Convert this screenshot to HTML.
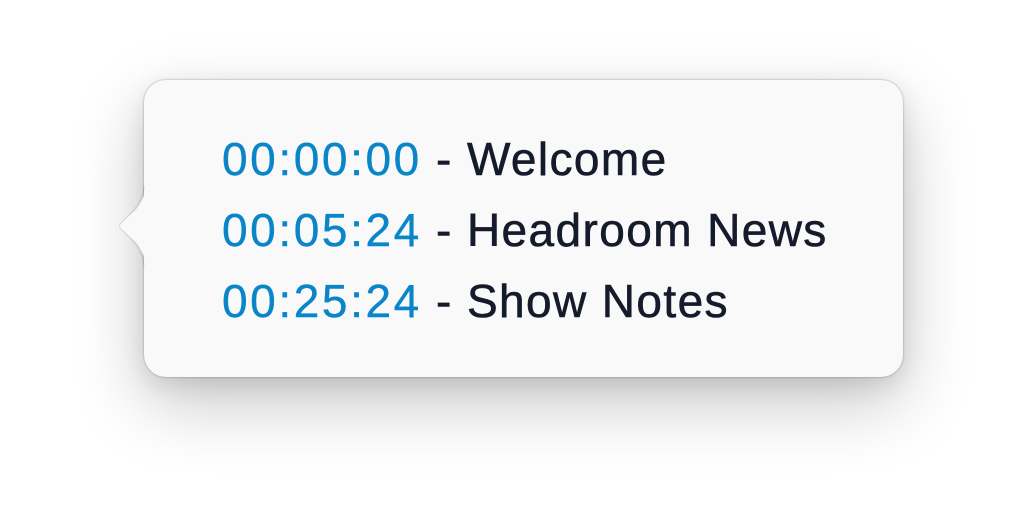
<!DOCTYPE html>
<html><head><style>
html,body{margin:0;padding:0;width:1014px;height:522px;background:#fff;overflow:hidden}
.box{position:absolute;left:144px;top:80px;width:759px;height:297px;border-radius:22px;background:#f9f9f9;
box-shadow:0 0 2px rgba(0,0,0,.35),0 26px 70px rgba(0,0,0,.22),0 8px 24px rgba(0,0,0,.10)}
svg{position:absolute;left:110px;top:180px}
.t{position:absolute;left:222px;font-family:"Liberation Sans",sans-serif;font-size:46px;color:#151b2a;white-space:nowrap;-webkit-text-stroke:0.6px #151b2a;letter-spacing:1.4px}
.b{color:#0a86c8;letter-spacing:2.6px;-webkit-text-stroke:0.4px #0a86c8}
</style></head><body>
<div class="box"></div>
<svg width="40" height="92" viewBox="0 0 40 92"><path d="M36 0 L36 6 C36 14 32 22 26 30 L12 42 C9 44 9 48 12 50 L26 62 C32 70 36 78 36 86 L36 92 L40 92 L40 0Z" fill="#f9f9f9"/><path d="M34 6 C34 14 30 22 24 30 L12 42 C9 44 9 48 12 50 L24 62 C30 70 34 78 34 86" fill="none" stroke="rgba(0,0,0,0.12)" stroke-width="1"/></svg>
<div class="t" style="top:132px"><span class="b">00:00:00</span> - Welcome</div>
<div class="t" style="top:203px"><span class="b">00:05:24</span> - Headroom News</div>
<div class="t" style="top:274px"><span class="b">00:25:24</span> - Show Notes</div>
</body></html>
